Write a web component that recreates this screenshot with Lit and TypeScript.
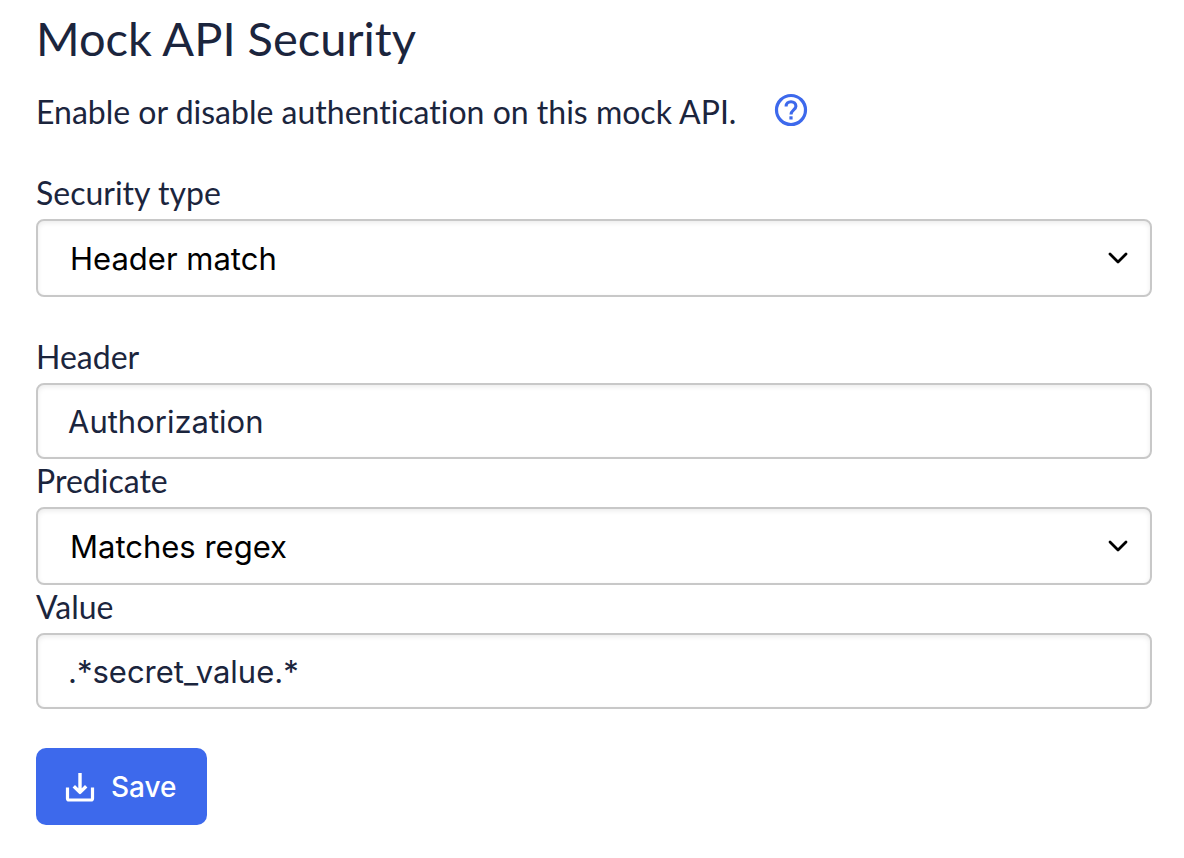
import { LitElement, html, css } from "lit";
import { customElement, state } from "lit/decorators.js";

@customElement("app-root")
export class AppRoot extends LitElement {
  @state() private header = "Authorization";
  @state() private value = ".*secret_value.*";

  static styles = css`
    :host {
      display: block;
      font-family: Inter, "Liberation Sans", sans-serif;
      font-variant-ligatures: none;
      color: #1b253d;
      background: #ffffff;
    }
    *,
    *::before,
    *::after {
      box-sizing: border-box;
    }
    .page {
      padding: 8px 32px 32px 36px;
    }
    .title {
      margin: 0 0 20px;
      font-family: Lato, sans-serif;
      font-size: 47px;
      line-height: 60px;
      font-weight: 400;
    }
    .intro {
      display: flex;
      align-items: center;
      gap: 38px;
      margin-bottom: 35px;
    }
    .intro-text {
      margin: 0;
      font-family: Lato, sans-serif;
      font-size: 32px;
      line-height: 48px;
    }
    .help {
      display: flex;
      padding: 0 0 4px;
      border: 0;
      background: none;
      color: #3d69ec;
      cursor: pointer;
    }
    .group {
      margin-bottom: 38px;
    }
    .group.last {
      margin-bottom: 39px;
    }
    .label {
      display: block;
      padding-bottom: 4px;
      font-family: Lato, sans-serif;
      font-size: 32px;
      line-height: 44px;
    }
    .control {
      display: block;
      width: 100%;
      height: 76px;
      margin: 0;
      padding: 0 30px;
      border: 2px solid #c8c8c8;
      border-radius: 8px;
      background: #ffffff;
      box-shadow: inset 0 2px 5px rgba(0, 0, 0, 0.08);
      color: inherit;
      font: inherit;
      font-size: 31px;
      line-height: 40px;
    }
    .picker {
      display: grid;
      align-items: center;
    }
    .picker .control {
      grid-area: 1 / 1;
      height: 78px;
      padding: 2px 64px 0 32px;
      color: #000000;
      appearance: none;
    }
    .chevron {
      grid-area: 1 / 1;
      justify-self: end;
      margin-right: 22px;
      pointer-events: none;
    }
    .save {
      display: flex;
      align-items: center;
      gap: 16px;
      height: 77px;
      padding: 0 30px 0 29px;
      border: 0;
      border-radius: 10px;
      background: #3d69ec;
      color: #ffffff;
      font: inherit;
      font-size: 28px;
      font-weight: 500;
      cursor: pointer;
    }
  `;

  private chevron() {
    return html`<svg class="chevron" width="24" height="16" viewBox="0 0 24 16" fill="none" aria-hidden="true">
      <path d="M4 4 L12 12 L20 4" stroke="#000" stroke-width="2.8" stroke-linecap="round" stroke-linejoin="round" />
    </svg>`;
  }

  render() {
    return html`
      <main class="page">
        <h1 class="title">Mock API Security</h1>
        <div class="intro">
          <p class="intro-text">Enable or disable authentication on this mock API.</p>
          <button class="help" type="button" aria-label="Help">
            <svg width="34" height="34" viewBox="0 0 34 34" fill="none" aria-hidden="true">
              <circle cx="17" cy="17" r="14.5" stroke="currentColor" stroke-width="3.2" />
              <path d="M12.1 13.4C12.1 10.6 14.2 8.7 17 8.7C19.8 8.7 21.9 10.6 21.9 13.3C21.9 16.8 17 17.2 17 21.6" stroke="currentColor" stroke-width="3.1" />
              <rect x="15.4" y="23.3" width="3.2" height="3.2" fill="currentColor" />
            </svg>
          </button>
        </div>
        <form @submit=${(e: Event) => e.preventDefault()}>
          <div class="group">
            <label class="label" for="type">Security type</label>
            <div class="picker">
              <select class="control" id="type">
                <option>Header match</option>
                <option>None</option>
              </select>
              ${this.chevron()}
            </div>
          </div>
          <div class="group last">
            <label class="label" for="header">Header</label>
            <input class="control" id="header" type="text" .value=${this.header}
              @input=${(e: Event) => (this.header = (e.target as HTMLInputElement).value)} />
            <label class="label" for="predicate">Predicate</label>
            <div class="picker">
              <select class="control" id="predicate">
                <option>Matches regex</option>
                <option>Equals</option>
              </select>
              ${this.chevron()}
            </div>
            <label class="label" for="value">Value</label>
            <input class="control" id="value" type="text" .value=${this.value}
              @input=${(e: Event) => (this.value = (e.target as HTMLInputElement).value)} />
          </div>
          <button class="save" type="submit">
            <svg width="30" height="30" viewBox="0 0 30 30" fill="none" stroke="currentColor" stroke-linejoin="round" aria-hidden="true">
              <path d="M2.5 15.5V26.5Q2.5 28 4 28H26Q27.5 28 27.5 26.5V15.5" stroke-width="3.2" />
              <path d="M15 1V20M8.8 14.2L15 20.4L21.2 14.2" stroke-width="3.4" />
            </svg>
            <span>Save</span>
          </button>
        </form>
      </main>
    `;
  }
}
